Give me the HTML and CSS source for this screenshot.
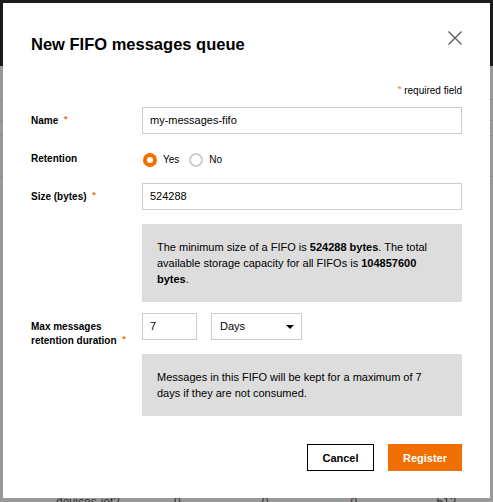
FILE: index.html
```html
<!DOCTYPE html>
<html>
<head>
<meta charset="utf-8">
<link rel="stylesheet" href="styles.css">
</head>
<body>
<div class="page">
  <div class="topbar"></div>
  <div class="bg-rows">
    <div class="bg-row r1"></div>
    <div class="bg-row r2"></div>
    <div class="bg-row r3"></div>
    <div class="bg-row r4"></div>
    <div class="bg-spacer"></div>
    <div class="bg-data">
      <span class="c1">devices-iot2</span>
      <span class="c2">0</span>
      <span class="c3">0</span>
      <span class="c4">0</span>
      <span class="c5">512 kbytes</span>
    </div>
  </div>
</div>

<div class="modal">
  <div class="modal-head">
    <h1 class="title">New FIFO messages queue</h1>
    <button class="close" aria-label="Close">
      <svg width="14" height="14" viewBox="0 0 14 14"><path d="M0.5 0.5 L13.5 13.5 M13.5 0.5 L0.5 13.5" stroke="#5a5a5a" stroke-width="1.3" fill="none"/></svg>
    </button>
  </div>
  <div class="required-note"><span class="star">*</span> required field</div>

  <div class="form">
    <div class="row">
      <div class="label">Name <span class="star">*</span></div>
      <div class="field">
        <div class="input">my-messages-fifo</div>
      </div>
    </div>

    <div class="row">
      <div class="label">Retention</div>
      <div class="field radios">
        <span class="radio checked"></span><span class="radio-text">Yes</span>
        <span class="radio"></span><span class="radio-text">No</span>
      </div>
    </div>

    <div class="row">
      <div class="label">Size (bytes) <span class="star">*</span></div>
      <div class="field stack">
        <div class="input">524288</div>
        <div class="info">The minimum size of a FIFO is <b>524288 bytes</b>. The total available storage capacity for all FIFOs is <b>104857600 bytes</b>.</div>
      </div>
    </div>

    <div class="row">
      <div class="label">Max messages<br>retention duration <span class="star">*</span></div>
      <div class="field stack">
        <div class="inline">
          <div class="input small">7</div>
          <div class="input select">Days<span class="caret"></span></div>
        </div>
        <div class="info">Messages in this FIFO will be kept for a maximum of 7 days if they are not consumed.</div>
      </div>
    </div>
  </div>

  <div class="actions">
    <button class="btn cancel">Cancel</button>
    <button class="btn register">Register</button>
  </div>
</div>
</body>
</html>
```

FILE: styles.css
```css
html, body {
  margin: 0;
  padding: 0;
}
body {
  width: 493px;
  height: 502px;
  overflow: hidden;
  background: #999999;
  font-family: "Liberation Sans", Arial, sans-serif;
  position: relative;
}
.page {
  display: flex;
  flex-direction: column;
}
.topbar {
  height: 66px;
  background: #1b1b1b;
}
.bg-rows {
  display: flex;
  flex-direction: column;
}
.bg-row {
  border-bottom: 1px solid #8c8c8c;
}
.r1 { height: 33px; }
.r2 { height: 20px; }
.r3 { height: 14px; }
.r4 { height: 40px; }
.bg-spacer { height: 317px; }
.bg-data {
  display: flex;
  font-size: 12px;
  color: #2e2e2e;
  height: 16px;
  line-height: 16px;
}
.bg-data .c1 { margin-left: 56px; width: 121px; }
.bg-data .c2 { width: 90px; }
.bg-data .c3 { width: 91px; }
.bg-data .c4 { width: 88px; }

.modal {
  position: absolute;
  left: 3px;
  top: 3px;
  width: 487px;
  height: 495px;
  box-sizing: border-box;
  background: #ffffff;
  padding: 30px 28px 0 28px;
  color: #000;
}
.modal-head {
  display: flex;
  justify-content: space-between;
  align-items: flex-start;
}
.title {
  margin: 0;
  font-size: 16.5px;
  line-height: 22px;
  font-weight: bold;
  letter-spacing: 0;
}
.close {
  border: 0;
  background: none;
  padding: 0;
  margin-top: -2px;
  width: 14px;
  height: 14px;
  display: block;
}
.close svg { display: block; }
.star {
  color: #f16e00;
  font-size: 9px;
  position: relative;
  top: -2px;
  margin-left: 3px;
}
.required-note {
  margin-top: 30px;
  text-align: right;
  font-size: 10px;
  line-height: 12px;
  color: #000;
}
.required-note .star { margin-left: 0; margin-right: 0; }

.form {
  margin-top: 10px;
  display: flex;
  flex-direction: column;
  gap: 11px;
}
.row {
  display: grid;
  grid-template-columns: 111px 320px;
  align-items: start;
}
.label {
  font-size: 10px;
  line-height: 14px;
  font-weight: bold;
  padding-top: 7px;
}
.field.stack {
  display: flex;
  flex-direction: column;
  gap: 14px;
}
.input {
  box-sizing: border-box;
  height: 27px;
  border: 1px solid #cccccc;
  padding: 0 7px;
  font-size: 11px;
  line-height: 25px;
  color: #000;
  background: #fff;
}
.inline {
  display: flex;
  gap: 14px;
}
.input.small { width: 55px; }
.input.select {
  width: 91px;
  display: flex;
  justify-content: space-between;
  align-items: center;
  padding: 0 7px 0 8px;
}
.caret {
  width: 0;
  height: 0;
  border-left: 4px solid transparent;
  border-right: 4px solid transparent;
  border-top: 4px solid #000;
  margin-top: 1px;
}
.radios {
  display: flex;
  align-items: center;
  height: 27px;
  padding-top: 2px;
  box-sizing: border-box;
  padding-left: 1px;
}
.radio {
  width: 14px;
  height: 14px;
  box-sizing: border-box;
  border-radius: 50%;
  border: 2px solid #cfcfcf;
  background: #fff;
}
.radio.checked {
  border: 4.5px solid #f16e00;
}
.radio-text {
  font-size: 10px;
  margin-left: 6px;
  margin-right: 10px;
}
.info {
  background: #dddddd;
  padding: 15px;
  font-size: 11px;
  line-height: 16px;
  color: #000;
}
.actions {
  margin-top: 28px;
  display: flex;
  justify-content: flex-end;
  gap: 14px;
}
.btn {
  height: 27px;
  box-sizing: border-box;
  padding: 0;
  text-align: center;
  font-family: "Liberation Sans", Arial, sans-serif;
  font-size: 11px;
  font-weight: bold;
  border: 1px solid #000;
  background: #fff;
  color: #000;
}
.btn.cancel { width: 67px; }
.btn.register {
  width: 74px;
  background: #f16e00;
  border-color: #f16e00;
  color: #fff;
}
```
